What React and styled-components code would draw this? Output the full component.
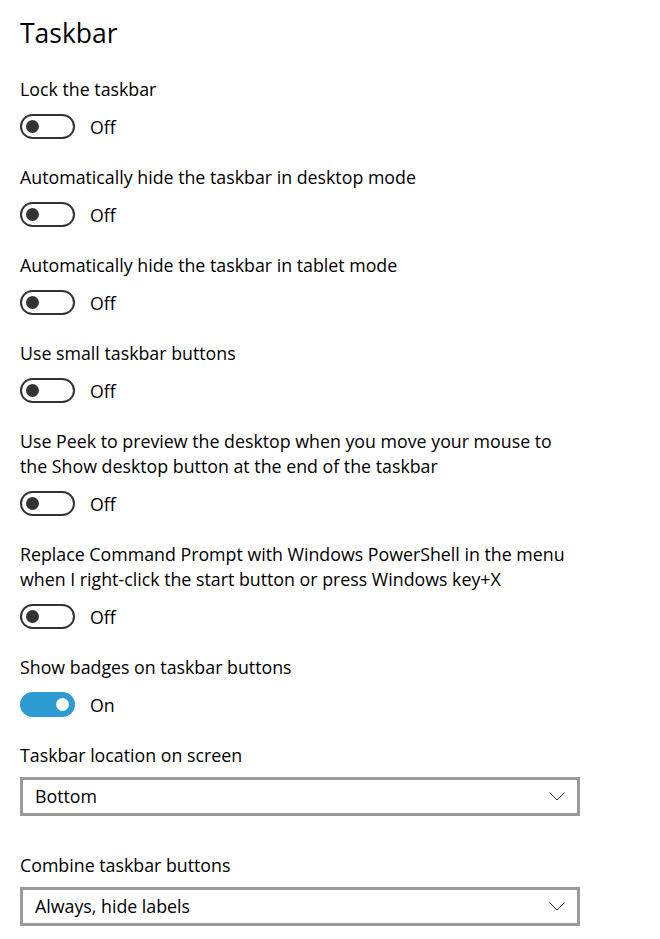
import React from "react";
import styled, { createGlobalStyle } from "styled-components";

const GlobalStyle = createGlobalStyle`
    html, body {
        margin: 0;
        padding: 0;
        background: #ffffff;
    }
    body {
        font-family: "Open Sans", "Noto Sans", "Liberation Sans", sans-serif;
        color: #000000;
    }
`;

const toggles = [
    { label: "Lock the taskbar", on: false },
    { label: "Automatically hide the taskbar in desktop mode", on: false },
    { label: "Automatically hide the taskbar in tablet mode", on: false },
    { label: "Use small taskbar buttons", on: false },
    {
        label: [
            "Use Peek to preview the desktop when you move your mouse to",
            "the Show desktop button at the end of the taskbar",
        ],
        on: false,
    },
    {
        label: [
            "Replace Command Prompt with Windows PowerShell in the menu",
            "when I right-click the start button or press Windows key+X",
        ],
        on: false,
    },
    { label: "Show badges on taskbar buttons", on: true },
];

const selects = [
    { label: "Taskbar location on screen", value: "Bottom" },
    { label: "Combine taskbar buttons", value: "Always, hide labels" },
];

const Chevron = () => (
    <svg width="16" height="9" viewBox="0 0 16 9">
        <path d="M0.5 0.5 L8 8 L15.5 0.5" fill="none" stroke="#333" strokeWidth="1" />
    </svg>
);

const App = () => {
    return (
        <StPage>
            <GlobalStyle />
            <StTitle>Taskbar</StTitle>
            {toggles.map((t, i) => (
                <StSection key={i}>
                    <StLabel>
                        {Array.isArray(t.label)
                            ? t.label.map((line) => <div key={line}>{line}</div>)
                            : t.label}
                    </StLabel>
                    <StToggleRow>
                        <StSwitch on={t.on}>
                            <StKnob on={t.on} />
                        </StSwitch>
                        <StState>{t.on ? "On" : "Off"}</StState>
                    </StToggleRow>
                </StSection>
            ))}
            {selects.map((s, i) => (
                <StSelectSection key={s.label} first={i === 0}>
                    <StLabel>{s.label}</StLabel>
                    <StSelect>
                        <span>{s.value}</span>
                        <Chevron />
                    </StSelect>
                </StSelectSection>
            ))}
        </StPage>
    );
};

const StPage = styled.div`
    width: 660px;
    height: 939px;
    padding: 13px 20px 0 20px;
    box-sizing: border-box;
    overflow: hidden;
`;

const StTitle = styled.h1`
    margin: 0 0 24px 0;
    font-size: 26.5px;
    font-weight: 400;
    line-height: 40px;
`;

const StSection = styled.div`
    margin-bottom: 26px;
`;

const StLabel = styled.div`
    font-size: 17.8px;
    line-height: 25px;
`;

const StToggleRow = styled.div`
    display: flex;
    align-items: center;
    height: 25px;
    margin-top: 12px;
`;

const StSwitch = styled.div`
    width: 55px;
    height: 25px;
    box-sizing: border-box;
    border-radius: 13px;
    border: ${(p) => (p.on ? "none" : "2.5px solid #333333")};
    background-color: ${(p) => (p.on ? "#2c9bd1" : "#ffffff")};
    display: flex;
    align-items: center;
    justify-content: ${(p) => (p.on ? "flex-end" : "flex-start")};
    padding: 0 ${(p) => (p.on ? "6.5px" : "4px")};
`;

const StKnob = styled.div`
    width: 13px;
    height: 13px;
    border-radius: 50%;
    background-color: ${(p) => (p.on ? "#ffffff" : "#333333")};
`;

const StState = styled.span`
    margin-left: 15px;
    font-size: 17.8px;
`;

const StSelectSection = styled.div`
    margin-bottom: 37.5px;
`;

const StSelect = styled.div`
    margin-top: 8.5px;
    width: 560px;
    height: 39px;
    box-sizing: border-box;
    border: 3px solid #999999;
    display: flex;
    align-items: center;
    justify-content: space-between;
    padding: 0 12px 0 12px;
    font-size: 17.8px;
`;

export default App;
